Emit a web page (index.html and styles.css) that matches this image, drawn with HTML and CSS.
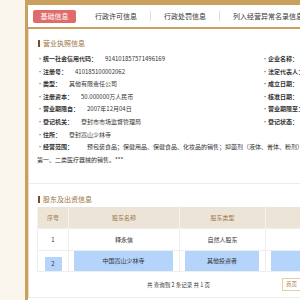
FILE: index.html
```html
<!doctype html>
<html lang="zh-CN">
<head>
    <meta charset="UTF-8">
    <meta name="viewport" content="width=device-width, initial-scale=1.0">
    <title>基础信息</title>
    <link rel="stylesheet" href="styles.css">
</head>
<body>
    <div class="page">
        <div class="tabs">
            <div class="tab active">基础信息</div>
            <div class="tab">行政许可信息</div>
            <div class="tab">行政处罚信息</div>
            <div class="tab">列入经营异常名录信息</div>
        </div>

        <div class="content">
            <div class="section">
                <h3 class="title">营业执照信息</h3>
                <div class="info">
                    <div class="item"><b>统一社会信用代码：</b>914101857571496169</div>
                    <div class="item"><b>企业名称：</b>河南少林无形资产管理有限公司</div>
                    <div class="item"><b>注册号：</b>410185100002062</div>
                    <div class="item"><b>法定代表人：</b>释永信</div>
                    <div class="item"><b>类型：</b>其他有限责任公司</div>
                    <div class="item"><b>成立日期：</b>2007年12月04日</div>
                    <div class="item"><b>注册资本：</b>50.000000万人民币</div>
                    <div class="item"><b>核准日期：</b>2017年06月20日</div>
                    <div class="item"><b>营业期限自：</b>2007年12月04日</div>
                    <div class="item"><b>营业期限至：</b>2027年12月03日</div>
                    <div class="item"><b>登记机关：</b>登封市市场监督管理局</div>
                    <div class="item"><b>登记状态：</b>存续</div>
                    <div class="item"><b>住所：</b>登封嵩山少林寺</div>
                    <div class="item"></div>
                    <div class="item wide"><b>经营范围：</b>预包装食品；保健用品、保健食品、化妆品的销售；抑菌剂（液体、膏体、粉剂）的销售；<br>第一、二类医疗器械的销售。***</div>
                </div>
            </div>

            <div class="section holders">
                <h3 class="title">股东及出资信息</h3>
                <table class="grid">
                    <tr>
                        <th class="col-no">序号</th>
                        <th class="col-name">股东名称</th>
                        <th class="col-type">股东类型</th>
                        <th>认缴出资额</th>
                    </tr>
                    <tr class="row-a">
                        <td>1</td>
                        <td>释永信</td>
                        <td>自然人股东</td>
                        <td>10.000000万元</td>
                    </tr>
                    <tr class="row-b">
                        <td><span class="sel-num">2</span></td>
                        <td><div class="sel">中国嵩山少林寺</div></td>
                        <td><div class="sel">其他投资者</div></td>
                        <td><div class="sel">40.000000万元</div></td>
                    </tr>
                </table>
                <div class="pager">
                    <span class="total">共 查询到 2 条记录 共 1 页</span>
                    <span class="btn">首页</span>
                </div>
            </div>
        </div>
    </div>
</body>
</html>
```

FILE: styles.css
```css
* {
    margin: 0;
    padding: 0;
}

body {
    background-color: #faf6ee;
    font-family: "Noto Sans CJK SC", "Noto Sans", sans-serif;
    color: #333;
    overflow: hidden;
}

.page {
    margin-left: 25px;
    width: 560px;
    min-height: 300px;
    background-color: #fff;
    border-left: 3px solid #c9a05e;
    border-top: 5px solid #c9a05e;
}

.tabs {
    display: flex;
    align-items: center;
    height: 22px;
    padding-left: 5px;
    border-bottom: 2px solid #c9a05e;
}

.tab {
    font-size: 7px;
    line-height: 10px;
    padding: 0 13px;
    white-space: nowrap;
}

.tab + .tab + .tab {
    border-left: 1px solid #ddd;
}

.tab.active {
    width: 43px;
    height: 13px;
    line-height: 13px;
    padding: 0;
    margin-right: 6px;
    text-align: center;
    color: #fff;
    background-color: #e06b6b;
    border-radius: 2px;
}

.content {
    border-left: 1px solid #e8dcc4;
}

.section {
    padding: 9px 0 17px 8px;
}

.section + .section {
    border-top: 1px solid #ececec;
}

.title {
    display: flex;
    align-items: center;
    font-size: 7px;
    line-height: 10px;
    font-weight: normal;
    color: #9b7443;
}

.title::before {
    content: "";
    width: 2px;
    height: 7px;
    margin: 0 3px 0 1px;
    background-color: #7a4e22;
}

.info {
    display: grid;
    grid-template-columns: 225px 1fr;
    margin-top: 5px;
    font-size: 6px;
    line-height: 12.6px;
}

.item {
    white-space: nowrap;
}

.item:empty::before {
    content: none;
}

.item::before {
    content: "·";
    display: inline-block;
    width: 6px;
    color: #666;
}

.item b {
    margin-right: 8px;
}

.item.wide {
    grid-column: 1 / 3;
}

.item.wide b {
    margin-right: 14px;
}

.holders {
    padding: 10px 0 0 8px;
    border-bottom: 1px solid #ececec;
}

.grid {
    width: 480px;
    margin-top: 3px;
    border-collapse: collapse;
    font-size: 6px;
    text-align: center;
}

.grid th {
    height: 21px;
    font-weight: normal;
    color: #a0784a;
    background-color: #ece4d7;
    border-left: 1px solid #f6f1e9;
}

.grid td {
    padding: 0;
    border: 1px solid #eee;
}

.col-no {
    width: 30px;
}

.col-name {
    width: 110px;
}

.col-type {
    width: 85px;
}

.row-a td {
    height: 21px;
}

.row-b td {
    height: 20px;
}

.sel {
    height: 20px;
    line-height: 20px;
    margin: 0 6px 0 5px;
    background-color: #b5d4fb;
}

.sel-num {
    display: block;
    width: 17px;
    height: 14px;
    line-height: 14px;
    margin: 5px auto 0;
    background-color: #b5d4fb;
}

.pager {
    display: flex;
    align-items: center;
    height: 25px;
    padding-left: 110px;
    font-size: 5.5px;
}

.total {
    width: 60px;
    white-space: nowrap;
}

.btn {
    width: 17px;
    height: 11px;
    line-height: 11px;
    margin-left: 75px;
    text-align: center;
    color: #a0784a;
    border: 1px solid #e2cfaa;
}
```
